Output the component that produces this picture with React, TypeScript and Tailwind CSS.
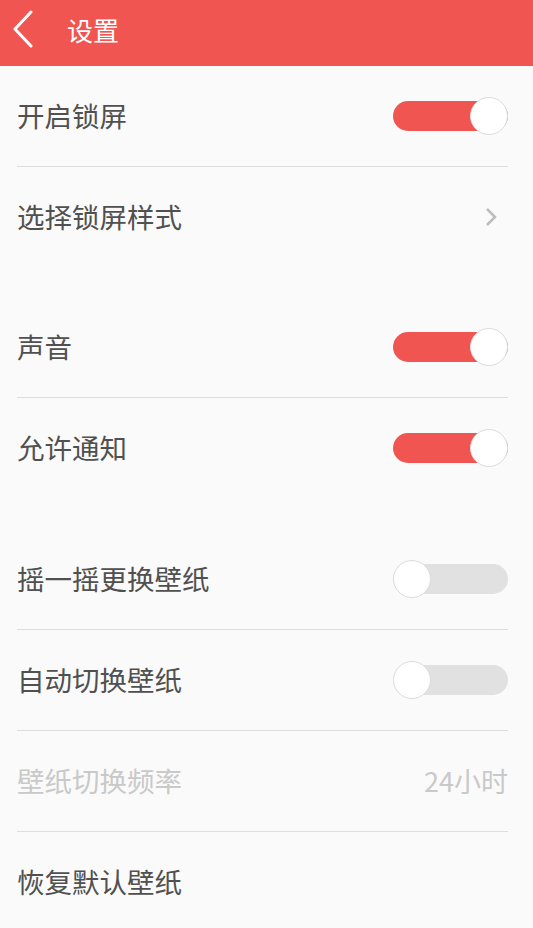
import React, { useState } from "react";

const font = { fontFamily: '"Noto Sans CJK SC", "Noto Sans", sans-serif' };

function Toggle({ on, onChange }: { on: boolean; onChange: () => void }) {
  return (
    <button
      onClick={onChange}
      className="relative w-[115px] h-[38px] shrink-0"
    >
      <span
        className={`absolute left-0 right-0 top-[4px] h-[30px] rounded-full ${
          on ? "bg-[#f05552]" : "bg-[#e1e1e1]"
        }`}
      />
      <span
        className={`absolute top-0 w-[38px] h-[38px] rounded-full bg-white border border-[#dcdcdc] ${
          on ? "right-0" : "left-0"
        }`}
      />
    </button>
  );
}

const Divider = () => <div className="ml-[17px] mr-[25px] h-px bg-[#dedede]" />;

function Row({
  label,
  dim,
  children,
}: {
  label: string;
  dim?: boolean;
  children?: React.ReactNode;
}) {
  return (
    <div className="h-[100px] flex items-center justify-between pl-[17px] pr-[25px]">
      <span
        className={`text-[27.5px] ${dim ? "text-[#c9c9c9]" : "text-[#505050]"}`}
      >
        {label}
      </span>
      {children}
    </div>
  );
}

export default function App() {
  const [state, setState] = useState({
    lock: true,
    sound: true,
    notify: true,
    shake: false,
    auto: false,
  });
  const flip = (k: keyof typeof state) =>
    setState((s) => ({ ...s, [k]: !s[k] }));

  return (
    <div className="min-h-screen bg-[#fafafa]" style={font}>
      {/* header */}
      <div className="h-[66px] bg-[#f05552] flex items-center pb-[8px]">
        <svg width="26" height="38" viewBox="0 0 26 38" className="ml-[10px]">
          <path
            d="M21 2 L5 19 L21 36"
            fill="none"
            stroke="white"
            strokeWidth="3"
            strokeLinecap="round"
            strokeLinejoin="round"
          />
        </svg>
        <span className="ml-[31px] text-white text-[26px]">设置</span>
      </div>

      {/* section 1 */}
      <Row label="开启锁屏">
        <Toggle on={state.lock} onChange={() => flip("lock")} />
      </Row>
      <Divider />
      <Row label="选择锁屏样式">
        <svg width="14" height="20" viewBox="0 0 14 20" className="mr-[9px]">
          <path
            d="M2 2 L10 10 L2 18"
            fill="none"
            stroke="#bdbdbd"
            strokeWidth="2.5"
          />
        </svg>
      </Row>

      <div className="h-[30px]" />

      {/* section 2 */}
      <Row label="声音">
        <Toggle on={state.sound} onChange={() => flip("sound")} />
      </Row>
      <Divider />
      <Row label="允许通知">
        <Toggle on={state.notify} onChange={() => flip("notify")} />
      </Row>

      <div className="h-[31px]" />

      {/* section 3 */}
      <Row label="摇一摇更换壁纸">
        <Toggle on={state.shake} onChange={() => flip("shake")} />
      </Row>
      <Divider />
      <Row label="自动切换壁纸">
        <Toggle on={state.auto} onChange={() => flip("auto")} />
      </Row>
      <Divider />
      <Row label="壁纸切换频率" dim>
        <span className="text-[27px] text-[#c9c9c9]">24小时</span>
      </Row>
      <Divider />
      <Row label="恢复默认壁纸" />
    </div>
  );
}
